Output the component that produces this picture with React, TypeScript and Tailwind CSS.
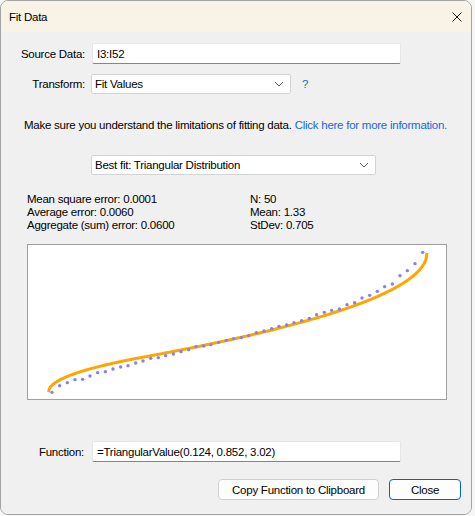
import React from "react";

// observed sample points (page coordinates), sorted by rank
const dots: [number, number][] = [
  [153, 490], [176, 470], [199, 461], [222, 452], [245, 451], [267, 441], [290, 431], [313, 428], [336, 420], [359, 414],
  [381, 410], [404, 402], [426, 396], [449, 388], [472, 386], [494, 380], [517, 375], [540, 368], [563, 362], [585, 353],
  [608, 351], [630, 347], [653, 340], [676, 334], [698, 329], [721, 326], [743, 320], [766, 311], [789, 306], [812, 299],
  [834, 292], [857, 288], [879, 281], [902, 275], [925, 268], [947, 257], [970, 250], [992, 244], [1015, 240], [1038, 227],
  [1061, 221], [1083, 207], [1106, 199], [1129, 187], [1151, 173], [1174, 165], [1197, 140], [1219, 125], [1242, 104], [1265, 70],
].map(([x, y]) => [x / 3, 230 + y / 3]);

// inverse cdf of triangular(a, c, b)
const triInv = (p: number, a: number, c: number, b: number) => {
  const fc = (c - a) / (b - a);
  if (p < fc) return a + Math.sqrt(p * (b - a) * (c - a));
  return b - Math.sqrt((1 - p) * (b - a) * (b - c));
};

const curvePath = (() => {
  const a = 0.124, c = 0.852, b = 3.02;
  const pts: string[] = [];
  for (let i = 0; i <= 400; i++) {
    const p = i / 400;
    const v = triInv(p, a, c, b);
    const x = 47.5 + p * 378.5;
    const y = 393 - ((v - a) / (b - a)) * 139;
    pts.push(`${i === 0 ? "M" : "L"}${x.toFixed(2)},${y.toFixed(2)}`);
  }
  return pts.join(" ");
})();

const Chevron = () => (
  <svg width="10" height="6" viewBox="0 0 10 6" className="shrink-0">
    <polyline points="1,1 5,5 9,1" fill="none" stroke="#5f5f5f" strokeWidth="1" />
  </svg>
);

const TextBox = ({ value }: { value: string }) => (
  <div className="w-[309px] h-[21px] bg-white border border-[#e6e6e6] border-b-[#868686] rounded-[2px] flex items-center pl-[4px]">
    {value}
  </div>
);

const Select = ({ value, width }: { value: string; width: string }) => (
  <div className={`${width} h-[20px] bg-white border border-[#d3d3d3] rounded-[2px] flex items-center justify-between pl-[3px] pr-[6px]`}>
    <span>{value}</span>
    <Chevron />
  </div>
);

export default function App() {
  return (
    <div
      className="w-[475px] h-[516px] bg-[#f6f6f6] text-[11.5px] tracking-[-0.25px] leading-[14px] text-black"
      style={{ fontFamily: '"Liberation Sans", Arial, sans-serif' }}
    >
      <div className="w-[472px] h-[515px] border border-[#a3a3a3] rounded-[8px] overflow-hidden flex flex-col">
        {/* title bar */}
        <div className="h-[31px] shrink-0 bg-[#f9f2e7] flex items-center justify-between pl-[8px] pr-[9px]">
          <span>Fit Data</span>
          <svg width="10" height="10" viewBox="0 0 10 10">
            <path d="M0.5 0.5 L9.5 9.5 M9.5 0.5 L0.5 9.5" stroke="#1a1a1a" strokeWidth="1" />
          </svg>
        </div>

        {/* body */}
        <div className="flex-1 bg-[#f0f0f0] flex flex-col pt-[11px]">
          <div className="flex items-center">
            <span className="w-[84px] text-right">Source Data:</span>
            <div className="ml-[7px]">
              <TextBox value="I3:I52" />
            </div>
          </div>

          <div className="flex items-center mt-[10px]">
            <span className="w-[84px] text-right">Transform:</span>
            <div className="ml-[6px]">
              <Select value="Fit Values" width="w-[200px]" />
            </div>
            <span className="ml-[11px] text-[#1a66d6]">?</span>
          </div>

          <div className="mt-[24px] pl-[23px] whitespace-nowrap">
            Make sure you understand the limitations of fitting data.{" "}
            <span className="text-[#1a66d6]">Click here for more information.</span>
          </div>

          <div className="mt-[23px] pl-[90px]">
            <Select value="Best fit: Triangular Distribution" width="w-[285px]" />
          </div>

          <div className="mt-[18px] pl-[26px] flex leading-[13px]">
            <div className="w-[223px] flex flex-col">
              <span>Mean square error: 0.0001</span>
              <span>Average error: 0.0060</span>
              <span>Aggregate (sum) error: 0.0600</span>
            </div>
            <div className="flex flex-col">
              <span>N: 50</span>
              <span>Mean: 1.33</span>
              <span>StDev: 0.705</span>
            </div>
          </div>

          <div className="mt-[12px] ml-[26px] w-[420px] h-[156px] bg-white border border-[#a0a0a0]">
            <svg width="418" height="154" viewBox="27 246 418 154">
              <path d={curvePath} fill="none" stroke="#ffa500" strokeWidth="3" strokeLinecap="butt" />
              {dots.map(([x, y], i) => (
                <circle key={i} cx={x} cy={y} r="1.7" fill="#7f7fff" />
              ))}
            </svg>
          </div>

          <div className="flex items-center mt-[41px]">
            <span className="w-[83px] text-right">Function:</span>
            <div className="ml-[8px]">
              <TextBox value="=TriangularValue(0.124, 0.852, 3.02)" />
            </div>
          </div>

          <div className="flex justify-end mt-[17px] pr-[10px] gap-[10px]">
            <button className="w-[161px] h-[21px] bg-[#fdfdfd] border border-[#d0d0d0] rounded-[4px] flex items-center justify-center">
              Copy Function to Clipboard
            </button>
            <button className="w-[72px] h-[21px] bg-[#fdfdfd] border border-[#0067c0] rounded-[4px] flex items-center justify-center">
              Close
            </button>
          </div>
        </div>
      </div>
    </div>
  );
}
